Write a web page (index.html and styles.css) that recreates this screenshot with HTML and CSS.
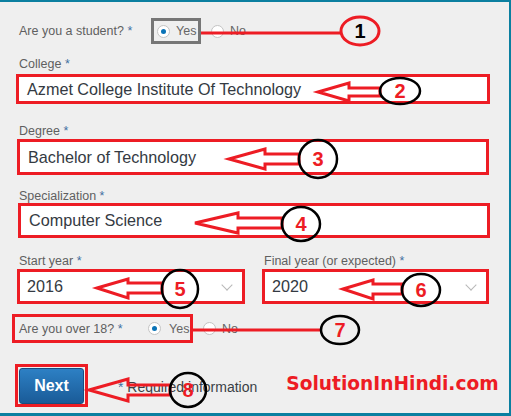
FILE: index.html
```html
<!DOCTYPE html>
<html>
<head>
<meta charset="utf-8">
<link rel="stylesheet" href="styles.css">
</head>
<body>
<div class="page">
  <div class="row-student">
    <span class="q-label">Are you a student? <span class="req">*</span></span>
    <span class="gray-box"><span class="radio on"></span><span class="opt">Yes</span></span>
    <span class="radio no-radio"></span><span class="opt">No</span>
  </div>

  <div class="label lbl-college">College <span class="req">*</span></div>
  <div class="box box-college"><span class="val">Azmet College Institute Of Technology</span></div>

  <div class="label lbl-degree">Degree <span class="req">*</span></div>
  <div class="box box-degree"><span class="val">Bachelor of Technology</span></div>

  <div class="label lbl-spec">Specialization <span class="req">*</span></div>
  <div class="box box-spec"><span class="val">Computer Science</span></div>

  <div class="years">
    <div class="year-col start-col">
      <div class="label">Start year <span class="req">*</span></div>
      <div class="box box-select start-sel"><span class="val">2016</span><span class="chev"></span></div>
    </div>
    <div class="year-col final-col">
      <div class="label">Final year (or expected) <span class="req">*</span></div>
      <div class="box box-select final-sel"><span class="val">2020</span><span class="chev"></span></div>
    </div>
  </div>

  <div class="row-over">
    <div class="over-box">
      <span class="q-label2">Are you over 18? <span class="req">*</span></span>
      <span class="radio on"></span><span class="opt">Yes</span>
    </div>
    <span class="radio no-radio2"></span><span class="opt">No</span>
  </div>

  <div class="row-next">
    <div class="next-box"><button class="next-btn">Next</button></div>
    <span class="required"><span class="req">*</span> Required information</span>
    <span class="brand">SolutionInHindi.com</span>
  </div>

  <svg class="annot" width="511" height="416" viewBox="0 0 511 416">
    <g fill="none" stroke="#ed1c24" stroke-width="3">
      <line x1="201" y1="31" x2="341" y2="31"/>
      <line x1="193" y1="328" x2="321" y2="328"/>
      <polygon points="318,90 349,81 349,86 380,86 380,94 349,94 349,99"/>
      <polygon points="229,157 265,147 265,152 299,152 299,162 265,162 265,167"/>
      <polygon points="195,221 238,211 238,216 282,216 282,226 238,226 238,231"/>
      <polygon points="97,286 128,277 128,281 162,281 162,291 128,291 128,296"/>
      <polygon points="343,287 373,278 373,282 402,282 402,292 373,292 373,297"/>
      <polygon points="89,388 128,377 128,383 170,383 170,393 128,393 128,399"/>
      <ellipse cx="360" cy="29" rx="19" ry="14"/>
    </g>
    <g fill="none" stroke="#000" stroke-width="2.5">
      <ellipse cx="400" cy="89" rx="20" ry="13"/>
      <ellipse cx="318" cy="157" rx="19" ry="19"/>
      <ellipse cx="301" cy="222" rx="19" ry="17"/>
      <ellipse cx="180" cy="287" rx="18" ry="19"/>
      <ellipse cx="421" cy="288" rx="19" ry="16"/>
      <ellipse cx="340" cy="328" rx="19" ry="14"/>
      <ellipse cx="188" cy="388" rx="18" ry="17"/>
    </g>
    <g class="nums">
      <text x="360" y="36" fill="#000">1</text>
      <text x="400" y="96" fill="#ed1c24">2</text>
      <text x="318" y="164" fill="#ed1c24">3</text>
      <text x="301" y="229" fill="#ed1c24">4</text>
      <text x="180" y="294" fill="#ed1c24">5</text>
      <text x="421" y="295" fill="#ed1c24">6</text>
      <text x="340" y="335" fill="#ed1c24">7</text>
      <text x="188" y="395" fill="#ed1c24">8</text>
    </g>
  </svg>
</div>
</body>
</html>
```
FILE: styles.css
```css
* { box-sizing: border-box; }
html, body { margin: 0; padding: 0; }
body { font-family: "Liberation Sans", Arial, sans-serif; }

.page {
  position: relative;
  width: 511px;
  height: 416px;
  background: #efefef;
  border-top: 2px solid #0b7fa0;
  border-right: 2px solid #0b7fa0;
  border-bottom: 3px solid #0b7fa0;
  padding-top: 16px;
  overflow: hidden;
}

.req { color: #3f6f9f; }

.row-student {
  display: flex;
  align-items: center;
  height: 26px;
}
.q-label {
  font-size: 12.5px;
  color: #5f5f5f;
  margin-left: 19px;
  width: 132px;
}
.gray-box {
  display: flex;
  align-items: center;
  width: 50px;
  height: 26px;
  border: 3px solid #767676;
  padding-left: 3px;
}
.radio {
  display: inline-block;
  width: 13px;
  height: 13px;
  border-radius: 50%;
  background: #fff;
  border: 1px solid #c4c4c4;
  position: relative;
  flex: none;
}
.radio.on::after {
  content: "";
  position: absolute;
  left: 3px;
  top: 3px;
  width: 5px;
  height: 5px;
  border-radius: 50%;
  background: #0a73b7;
}
.opt {
  font-size: 12.5px;
  color: #666;
  margin-left: 6px;
}
.no-radio { margin-left: 10px; }

.label {
  font-size: 12.5px;
  line-height: 14px;
  color: #5f5f5f;
  margin-left: 19px;
}
.lbl-college { margin-top: 13px; }
.lbl-degree { margin-top: 20px; }
.lbl-spec { margin-top: 14px; }

.box {
  display: flex;
  align-items: center;
  background: #fff;
  border: 3px solid #ed1c24;
}
.val {
  font-size: 16.2px;
  color: #343a42;
  padding-left: 8px;
}
.box-college { margin: 3px 0 0 16px; width: 474px; height: 30px; }
.box-degree { margin: 1px 0 0 17px; width: 472px; height: 36px; }
.box-spec { margin: 0 0 0 18px; width: 472px; height: 35px; }

.years {
  display: flex;
  margin-top: 16px;
}
.year-col .label { margin-left: 0; }
.start-col { margin-left: 19px; }
.final-col { margin-left: 19px; }
.final-col .label { margin-left: 0; }
.box-select {
  margin-top: 1px;
  height: 35px;
  justify-content: space-between;
}
.start-sel { margin-left: -2px; width: 228px; }
.final-sel { margin-left: -2px; width: 227px; }
.box-select .val { padding-left: 7px; }
.chev {
  width: 8px;
  height: 8px;
  border-right: 1.5px solid #b8b8b8;
  border-bottom: 1.5px solid #b8b8b8;
  transform: rotate(45deg);
  margin: -4px 11px 0 0;
}

.row-over {
  display: flex;
  align-items: center;
  margin-top: 10px;
}
.over-box {
  display: flex;
  align-items: center;
  margin-left: 12px;
  width: 181px;
  height: 29px;
  border: 3px solid #ed1c24;
  padding-left: 4px;
}
.q-label2 {
  font-size: 12.5px;
  color: #5f5f5f;
  width: 129px;
}
.over-box .opt { margin-left: 8px; }
.no-radio2 { margin-left: 10px; }

.row-next {
  display: flex;
  align-items: center;
  margin-top: 21px;
}
.next-box {
  margin-left: 15px;
  width: 73px;
  height: 43px;
  border: 3px solid #ed1c24;
  padding: 1px 1px 0 1px;
}
.next-btn {
  display: block;
  width: 65px;
  height: 36px;
  border: 1px solid #174d80;
  border-radius: 3px;
  background: linear-gradient(#2d80c4, #1a5b98);
  color: #fff;
  font-family: "Liberation Sans", Arial, sans-serif;
  font-weight: bold;
  font-size: 16px;
  padding: 0;
}
.required {
  font-size: 14px;
  color: #3a3f46;
  margin-left: 30px;
  margin-top: 2px;
}
.brand {
  font-family: "DejaVu Sans", sans-serif;
  font-weight: bold;
  font-size: 18.6px;
  color: #ed1c24;
  margin-left: 29px;
  margin-top: -5px;
  white-space: nowrap;
}

.annot {
  position: absolute;
  left: 0;
  top: 0;
  pointer-events: none;
}
.nums text {
  font-family: "Liberation Sans", Arial, sans-serif;
  font-weight: bold;
  font-size: 20px;
  text-anchor: middle;
}
```
